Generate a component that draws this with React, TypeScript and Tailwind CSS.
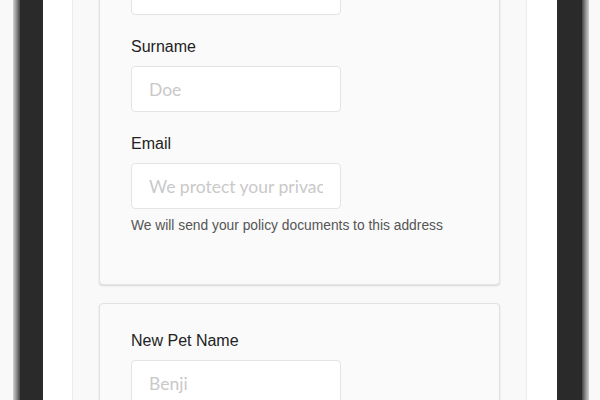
import React from 'react';

interface FieldProps {
  label: string;
  placeholder: string;
  help?: string;
}

const Field: React.FC<FieldProps> = ({ label, placeholder, help }) => {
  return (
    <div className="mb-[22px]">
      <label className="block text-[16px] leading-[20px] text-[#222] font-['Liberation_Sans',Arial,sans-serif]">
        {label}
      </label>
      <input
        type="text"
        placeholder={placeholder}
        className="mt-[9px] block h-[46px] w-[210px] rounded-[4px] border border-[#e4e4e4] bg-white px-[17px] text-[17.5px] font-['Lato',sans-serif] text-[#333] placeholder:text-[#c9c9c9] outline-none"
      />
      {help && (
        <p className="mt-[8px] text-[13.8px] leading-[18px] text-[#555] font-['Liberation_Sans',Arial,sans-serif]">
          {help}
        </p>
      )}
    </div>
  );
};

const App: React.FC = () => {
  return (
    <div className="flex h-[400px] w-[600px] overflow-hidden bg-[#f9f9f9] pl-[13px] pr-[11px]">
      {/* left rim + bezel */}
      <div className="w-[7px] bg-gradient-to-r from-[#d2d2d2] via-[#8f8f8f] to-[#444]"></div>
      <div className="w-[23px] bg-[#2a2a2a]"></div>

      {/* screen */}
      <div className="flex-1 overflow-hidden bg-white pl-[29px]">
        <div className="w-[455px] border-x border-[#ececec] bg-[#f9f9f9] px-[26px] pb-[40px]">
          <div className="mt-[-87px] rounded-[4px] border border-[#e2e2e2] bg-[#fafafa] px-[31px] pt-[26px] pb-[27px] shadow-[0_1px_2px_rgba(0,0,0,0.14)]">
            <Field label="First Name" placeholder="John" />
            <Field label="Surname" placeholder="Doe" />
            <Field
              label="Email"
              placeholder="We protect your privacy"
              help="We will send your policy documents to this address"
            />
          </div>

          <div className="mt-[18px] rounded-[4px] border border-[#e2e2e2] bg-[#fafafa] px-[31px] pt-[27px] pb-[26px] shadow-[0_1px_2px_rgba(0,0,0,0.14)]">
            <Field label="New Pet Name" placeholder="Benji" />
            <Field label="Breed" placeholder="Labrador" />
          </div>
        </div>
      </div>

      {/* right bezel + rim */}
      <div className="w-[25px] bg-[#2a2a2a]"></div>
      <div className="w-[7px] bg-gradient-to-r from-[#444] via-[#8f8f8f] to-[#d2d2d2]"></div>
    </div>
  );
};

export default App;
